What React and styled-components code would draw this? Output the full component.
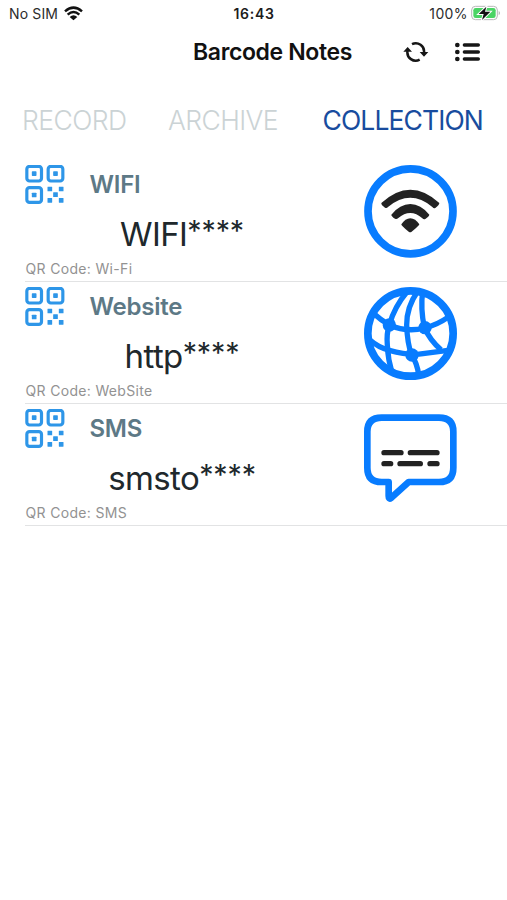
import React from "react";
import styled, { createGlobalStyle } from "styled-components";

const GlobalStyle = createGlobalStyle`
  * { box-sizing: border-box; }
  body { margin: 0; background: #fff; font-family: Inter, "Liberation Sans", sans-serif; }
`;

const Screen = styled.main`
  width: 507px;
  height: 900px;
  background: #fff;
  overflow: hidden;
`;

const Text = styled.span`
  white-space: nowrap;
  letter-spacing: ${(p) => p.$spacing || 0}px;
`;

const StatusBar = styled.div`
  display: grid;
  grid-template-columns: 1fr auto 1fr;
  align-items: center;
  height: 28px;
  padding: 0 6px 2px 9px;
  font-size: 14px;
  color: #2c2c2c;
`;

const StatusGroup = styled.div`
  display: flex;
  align-items: center;
  gap: ${(p) => p.$gap}px;
  justify-content: ${(p) => (p.$end ? "flex-end" : "flex-start")};
`;

const Clock = styled(Text)`
  margin-left: -2px;
  font-weight: 600;
  color: #1c1c1c;
`;

const NavBar = styled.header`
  display: flex;
  align-items: center;
  height: 48px;
  padding-left: 193px;
`;

const Title = styled.h1`
  margin: 0;
  width: 209.5px;
  font-size: 23px;
  font-weight: 600;
  letter-spacing: -0.36px;
  line-height: 48px;
  color: #111;
  white-space: nowrap;
`;

const NavActions = styled.div`
  display: flex;
  align-items: center;
  gap: 26.5px;
`;

const Tabs = styled.nav`
  display: flex;
  height: 88px;
  align-items: center;
  padding-left: 22px;
`;

const Tab = styled.a`
  width: ${(p) => p.$width}px;
  font-size: 26.5px;
  line-height: 32px;
  font-weight: ${(p) => (p.$active ? 400 : 300)};
  letter-spacing: ${(p) => p.$spacing}px;
  color: ${(p) => (p.$active ? "#184c9e" : "#cbd3d5")};
  white-space: nowrap;
`;

const Row = styled.article`
  display: flex;
  justify-content: space-between;
  height: ${(p) => p.$height}px;
  margin-left: 25px;
  padding: 1px 50px 0 0;
  border-bottom: 1px solid #e2e3e4;
`;

const RowBody = styled.div`
  width: 314px;
  padding-top: ${(p) => p.$top}px;
`;

const RowHead = styled.div`
  display: flex;
  align-items: center;
  gap: 24.5px;
  height: 40px;
`;

const RowTitle = styled.h2`
  margin: 0;
  font-size: 24px;
  line-height: 40px;
  font-weight: 600;
  letter-spacing: -0.25px;
  color: #5d7986;
`;

const RowValue = styled.div`
  height: 54px;
  padding-top: 9px;
  font-size: 33px;
  line-height: 40px;
  letter-spacing: -0.6px;
  text-align: center;
  color: #20282c;
`;

const Mask = styled.span`
  font-size: 28.5px;
  line-height: 1;
  letter-spacing: -0.1px;
  vertical-align: 5.5px;
`;

const Caption = styled.div`
  height: 20px;
  padding-left: 0.5px;
  font-size: 14px;
  line-height: 20px;
  letter-spacing: 0.33px;
  color: #929292;
`;

const Icon = styled.svg`
  display: block;
  flex: none;
`;

const BadgeSlot = styled.div`
  padding-top: ${(p) => p.$top}px;
`;

const WifiStatus = () => (
  <Icon width="19" height="15" viewBox="0 0 57 45" fill="none" stroke="#111" strokeWidth="7.5">
    <path d="M3 16Q28.500 -6 54 16M11 26Q28.500 10 46 26" />
    <path d="M17 33Q28.500 23 40 33L28.500 43Z" fill="#111" stroke="none" />
  </Icon>
);

const Battery = () => (
  <Icon width="30" height="16" viewBox="0 0 90 48">
    <rect x="2" y="4" width="77" height="40" rx="11" fill="#fff" stroke="#b7b9b8" strokeWidth="3" />
    <rect x="7" y="9" width="67" height="30" rx="7" fill="#4bd465" />
    <path d="M83 17Q91 24 83 31Z" fill="#b7b9b8" />
    <path d="M46 5L23 27H38L33 45L58 20H42Z" fill="#111" stroke="#fff" strokeWidth="6" paintOrder="stroke" />
  </Icon>
);

const Refresh = () => (
  <Icon width="26" height="22" viewBox="0 0 78 66" fill="none" stroke="#161616" strokeWidth="7.5">
    <path d="M27 9.500A25 25 0 0 1 63 35M50 56A25 25 0 0 1 13.500 30" />
    <path d="M50 33H76L63 47ZM1 32H27L14 18Z" fill="#161616" stroke="none" />
  </Icon>
);

const Menu = () => (
  <Icon width="25" height="20" viewBox="0 0 75 60" fill="#161616">
    {[9, 30, 51].map((y) => (
      <g key={y}>
        <circle cx="7" cy={y} r="7" />
        <rect x="23" y={y - 5} width="52" height="10" rx="5" />
      </g>
    ))}
  </Icon>
);

const QrIcon = () => (
  <Icon width="40" height="40" viewBox="-0.500 1 120 120" fill="#2e96e8">
    {[[0, 0], [64, 0], [0, 64]].map(([x, y]) => (
      <g key={`${x}-${y}`}>
        <rect x={x + 5} y={y + 5} width="44" height="44" rx="8" fill="none" stroke="#2e96e8" strokeWidth="9.500" />
        <rect x={x + 20} y={y + 20} width="14" height="14" rx="2" />
      </g>
    ))}
    {[[67, 66], [101, 66], [84, 83], [67, 100], [101, 100]].map(([x, y]) => (
      <rect key={`${x}-${y}`} x={x} y={y} width="14" height="14" rx="1" />
    ))}
  </Icon>
);

const WifiBadge = () => (
  <Icon width="93" height="93" viewBox="27 30 279 279" fill="none">
    <circle cx="166.500" cy="169" r="127.500" stroke="#087cff" strokeWidth="23" />
    <path d="M79 144Q122 104 166 104Q210 104 253 144Q253 150 241 159Q236 161 232 156Q166 101 99 156Q95 161 90 158Q78 150 79 144Z" fill="#222" />
    <path d="M109 179Q135 147 166 147Q197 147 223 179Q222 184 211 192Q206 194 202 190Q166 158 129 190Q125 194 120 191Q109 184 109 179Z" fill="#222" />
    <path d="M139 208Q151 190 166 190Q181 190 193 208Q193 212 169 231Q166 233 162 231Q138 212 139 208Z" fill="#222" />
  </Icon>
);

const GlobeBadge = () => (
  <Icon width="93" height="93" viewBox="27 21 279 279" fill="none" stroke="#087cff" strokeWidth="16">
    <circle cx="166.500" cy="160.500" r="128" strokeWidth="23" />
    <path d="M54 99Q76 119 103 135Q156 158 208 144Q245 136 282 110" />
    <path d="M42 178Q70 203 103 211Q164 228 204 221L279 211" />
    <path d="M158 33Q117 82 103 135Q94 160 97 196Q99 238 111 278" />
    <path d="M188 34Q155 80 155 135Q157 192 170 225Q187 251 191 285" />
    <path d="M203 34Q196 86 208 142Q225 181 258 209" />
    <g fill="#087cff" stroke="none">
      <circle cx="103" cy="135" r="20" />
      <circle cx="210" cy="143" r="20" />
      <circle cx="171" cy="225" r="20" />
    </g>
  </Icon>
);

const SmsBadge = () => (
  <Icon width="93" height="88" viewBox="27 27 279 264" fill="none" strokeLinecap="round" strokeLinejoin="round">
    <path d="M80 38H252Q295 38 295 80V188Q295 231 252 231H161L108 279Q101 284 101 273V231H80Q37 231 37 188V80Q37 38 80 38Z" stroke="#087cff" strokeWidth="20" />
    <path d="M87 143H138M166 143H246M87 176H107M135 176H196M225 176H246" stroke="#222" strokeWidth="16" />
  </Icon>
);

const items = [
  { title: "WIFI", value: "WIFI", kind: "Wi-Fi", Badge: WifiBadge, top: 0, bodyTop: 0, height: 118 },
  { title: "Website", value: "http", kind: "WebSite", Badge: GlobeBadge, top: 4, bodyTop: 4, height: 122 },
  { title: "SMS", value: "smsto", kind: "SMS", Badge: SmsBadge, top: 9, bodyTop: 4, height: 122 },
];

export default function App() {
  return (
    <>
      <GlobalStyle />
      <Screen>
        <StatusBar>
          <StatusGroup $gap={6}>
            <Text $spacing={0.15}>No SIM</Text>
            <WifiStatus />
          </StatusGroup>
          <Clock $spacing={0.7}>16:43</Clock>
          <StatusGroup $gap={3} $end>
            <Text $spacing={0.4}>100%</Text>
            <Battery />
          </StatusGroup>
        </StatusBar>
        <NavBar>
          <Title>Barcode Notes</Title>
          <NavActions>
            <Refresh />
            <Menu />
          </NavActions>
        </NavBar>
        <Tabs>
          <Tab $width={146} $spacing={-0.55}>RECORD</Tab>
          <Tab $width={154.5} $spacing={-0.6}>ARCHIVE</Tab>
          <Tab $width={165} $spacing={-0.9} $active>COLLECTION</Tab>
        </Tabs>
        {items.map(({ title, value, kind, Badge, top, bodyTop, height }) => (
          <Row key={title} $height={height}>
            <RowBody $top={bodyTop}>
              <RowHead>
                <QrIcon />
                <RowTitle>{title}</RowTitle>
              </RowHead>
              <RowValue>
                {value}
                <Mask>****</Mask>
              </RowValue>
              <Caption>QR Code: {kind}</Caption>
            </RowBody>
            <BadgeSlot $top={top}>
              <Badge />
            </BadgeSlot>
          </Row>
        ))}
      </Screen>
    </>
  );
}
